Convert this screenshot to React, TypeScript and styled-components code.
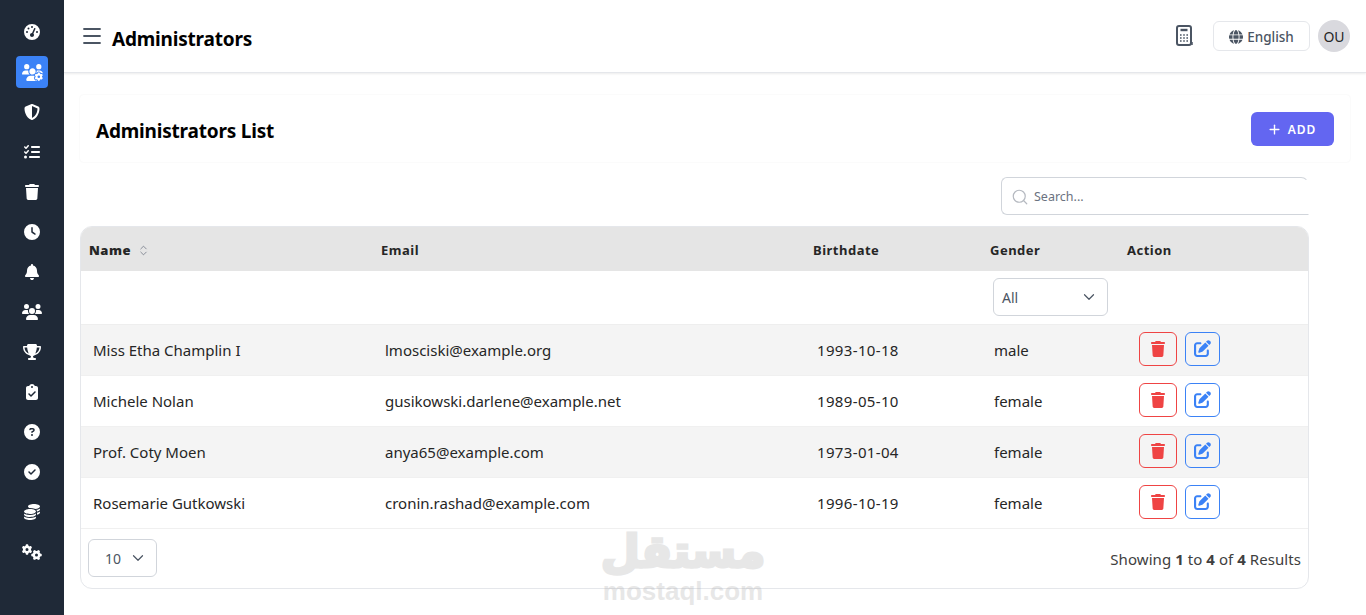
import styled, { createGlobalStyle } from "styled-components";
import { ChevronDown, ChevronsUpDown, Menu, Plus, Search } from "lucide-react";
import { IconType } from "react-icons";
import {
  FaBell,
  FaCircleCheck,
  FaCircleQuestion,
  FaClipboardCheck,
  FaClock,
  FaCoins,
  FaGaugeHigh,
  FaGears,
  FaGlobe,
  FaListCheck,
  FaPenToSquare,
  FaShieldHalved,
  FaTrash,
  FaTrophy,
  FaUsers,
  FaUsersGear,
} from "react-icons/fa6";

const GlobalStyle = createGlobalStyle`
  * { box-sizing: border-box; }
  html, body { margin: 0; height: 100%; background: #fff; }
  body { font-family: "Noto Sans", "Open Sans", sans-serif; color: #262626; overflow: hidden; }
`;

const Shell = styled.div`
  display: flex;
  height: 615px;
  position: relative;
  overflow: hidden;
`;

const Sidebar = styled.nav`
  width: 64px;
  flex: none;
  background: #1f2937;
  display: flex;
  flex-direction: column;
  align-items: center;
  gap: 8px;
  padding-top: 16px;
`;

const NavItem = styled.div<{ $active?: boolean }>`
  width: 32px;
  height: 32px;
  border-radius: 4px;
  display: flex;
  align-items: center;
  justify-content: center;
  color: #fff;
  background: ${(p) => (p.$active ? "#3b82f6" : "transparent")};
`;

const Main = styled.div`
  flex: 1;
  min-width: 0;
  display: flex;
  flex-direction: column;
`;

const Header = styled.header`
  height: 73px;
  flex: none;
  display: flex;
  align-items: center;
  padding: 0 16px;
  background: #fff;
  border-bottom: 1px solid #e5e7eb;
  box-shadow: 0 1px 2px rgba(0, 0, 0, 0.08);
`;

const MenuButton = styled.div`
  color: #4b5563;
  display: flex;
  margin-right: 8px;
`;

const PageTitle = styled.h1`
  margin: 5px 0 0;
  font-size: 19px;
  letter-spacing: -0.2px;
  font-weight: 700;
  color: #000;
  flex: 1;
`;

const CalcIcon = styled.svg`
  width: 18px;
  height: 22px;
  margin-right: 19px;
  margin-top: -1px;
`;

const LangButton = styled.div`
  width: 97px;
  height: 30px;
  border: 1px solid #e5e7eb;
  border-radius: 6px;
  display: flex;
  align-items: center;
  justify-content: center;
  gap: 4px;
  padding-top: 1px;
  font-size: 13.5px;
  font-weight: 500;
  color: #4b5563;
  margin-right: 8px;
`;

const Avatar = styled.div`
  width: 32px;
  height: 32px;
  border-radius: 50%;
  background: #d9d9de;
  color: #262626;
  font-size: 14px;
  display: flex;
  align-items: center;
  justify-content: center;
`;

const Content = styled.main`
  flex: 1;
  padding: 22px 16px 0;
`;

const TitleCard = styled.section`
  height: 67px;
  display: flex;
  align-items: center;
  justify-content: space-between;
  padding: 0 16px;
  border-radius: 4px;
  box-shadow: 0 0 2px rgba(0, 0, 0, 0.07);
`;

const ListTitle = styled.h2`
  margin: 4px 0 0;
  font-size: 19px;
  letter-spacing: -0.2px;
  font-weight: 700;
  color: #000;
`;

const AddButton = styled.div`
  width: 83px;
  height: 34px;
  border-radius: 6px;
  background: #6366f1;
  color: #fff;
  font-size: 12px;
  font-weight: 600;
  letter-spacing: 1px;
  display: flex;
  align-items: center;
  justify-content: center;
  gap: 6px;
  padding: 1px 2px 0 0;
`;

const TableArea = styled.div`
  width: 1229px;
`;

const SearchRow = styled.div`
  display: flex;
  justify-content: flex-end;
  margin: 15px 0 11px;
`;

const SearchBox = styled.div`
  width: 308px;
  height: 38px;
  border: 1px solid #d1d5db;
  border-radius: 6px 8px 0 6px;
  border-right-color: transparent;
  display: flex;
  align-items: center;
  gap: 5px;
  padding: 1px 0 0 9px;
  font-size: 12.5px;
  color: #6b7280;
`;

const TableFrame = styled.div`
  border: 1px solid #e5e7eb;
  border-radius: 12px;
  overflow: hidden;
  background: #fff;
`;

const Table = styled.table`
  width: 100%;
  border-collapse: collapse;
  table-layout: fixed;
`;

const HeadCell = styled.th<{ $width: number }>`
  width: ${(p) => p.$width}px;
  height: 44px;
  background: #e5e5e5;
  padding: 2px 8px 0;
  text-align: left;
  font-size: 13px;
  font-weight: 700;
  letter-spacing: 0.5px;
  color: #262626;
`;

const HeadInner = styled.span`
  display: flex;
  align-items: center;
  gap: 6px;
  color: #6b7280;

  b {
    color: #262626;
  }
`;

const FilterRow = styled.tr`
  height: 53px;
  border-bottom: 1px solid #eeeeee;
`;

const FilterCell = styled.td`
  padding: 0 11px;
`;

const SelectBox = styled.div<{ $width: number; $pad: number }>`
  width: ${(p) => p.$width}px;
  height: 38px;
  border: 1px solid #d1d5db;
  border-radius: 6px;
  display: flex;
  align-items: center;
  justify-content: space-between;
  padding: 0 9px 0 ${(p) => p.$pad}px;
  font-size: 14px;
  color: #4b5563;
  background: #fff;
`;

const Row = styled.tr<{ $shade: boolean }>`
  height: 51px;
  background: ${(p) => (p.$shade ? "#f4f4f4" : "#fff")};
  border-bottom: 1px solid #f0f0f0;
`;

const Cell = styled.td<{ $spaced?: boolean }>`
  padding: 0 12px;
  font-size: 15px;
  letter-spacing: ${(p) => (p.$spaced ? "0.35px" : "0")};
  color: #262626;
  white-space: nowrap;
`;

const ActionRow = styled.div`
  display: flex;
  gap: 8px;
  padding-left: 8px;
  margin-top: -2px;
`;

const IconButton = styled.div<{ $color: string; $width: number }>`
  width: ${(p) => p.$width}px;
  height: 34px;
  border: 1px solid ${(p) => p.$color};
  border-radius: 6px;
  color: ${(p) => p.$color};
  display: flex;
  align-items: center;
  justify-content: center;
`;

const Footer = styled.div`
  height: 59px;
  display: flex;
  align-items: center;
  justify-content: space-between;
  padding: 0 7px;
  font-size: 15px;
  letter-spacing: 0.06px;
  color: #404040;
`;

const FooterText = styled.span`
  padding-top: 1px;
`;

const Watermark = styled.div`
  position: absolute;
  left: 602px;
  top: 525px;
  width: 162px;
  display: flex;
  flex-direction: column;
  align-items: center;
  color: #aaaaaa;
  opacity: 0.28;
  pointer-events: none;
`;

const WatermarkArabic = styled.div`
  font-family: "DejaVu Sans", sans-serif;
  font-size: 45px;
  font-weight: 700;
  line-height: 53px;
  -webkit-text-stroke: 3px #aaaaaa;
`;

const WatermarkLatin = styled.div`
  font-family: "Liberation Sans", sans-serif;
  font-size: 26px;
  font-weight: 700;
  line-height: 26px;
`;

const navIcons: { icon: IconType; size: number }[] = [
  { icon: FaGaugeHigh, size: 16 },
  { icon: FaUsersGear, size: 21 },
  { icon: FaShieldHalved, size: 16 },
  { icon: FaListCheck, size: 16 },
  { icon: FaTrash, size: 16 },
  { icon: FaClock, size: 16 },
  { icon: FaBell, size: 16 },
  { icon: FaUsers, size: 20 },
  { icon: FaTrophy, size: 18 },
  { icon: FaClipboardCheck, size: 16 },
  { icon: FaCircleQuestion, size: 16 },
  { icon: FaCircleCheck, size: 16 },
  { icon: FaCoins, size: 16 },
  { icon: FaGears, size: 20 },
];

const admins = [
  { name: "Miss Etha Champlin I", email: "lmosciski@example.org", birthdate: "1993-10-18", gender: "male" },
  { name: "Michele Nolan", email: "gusikowski.darlene@example.net", birthdate: "1989-05-10", gender: "female" },
  { name: "Prof. Coty Moen", email: "anya65@example.com", birthdate: "1973-01-04", gender: "female" },
  { name: "Rosemarie Gutkowski", email: "cronin.rashad@example.com", birthdate: "1996-10-19", gender: "female" },
];

export default function App() {
  return (
    <Shell>
      <GlobalStyle />
      <Sidebar>
        {navIcons.map(({ icon: Icon, size }, i) => (
          <NavItem key={i} $active={i === 1}>
            <Icon size={size} />
          </NavItem>
        ))}
      </Sidebar>
      <Main>
        <Header>
          <MenuButton>
            <Menu size={24} strokeWidth={1.8} />
          </MenuButton>
          <PageTitle>Administrators</PageTitle>
          <CalcIcon viewBox="0 0 18 22" fill="none" stroke="#4b5563" strokeWidth="2">
            <rect x="1" y="1" width="14" height="19" rx="2" />
            <path d="M4.5 5h7" strokeWidth="2.4" />
            <path d="M4 10h1.6M7.2 10h1.6M10.4 10h1.6M4 13h1.6M7.2 13h1.6M10.4 13h1.6M4 16h1.6M7.2 16h1.6M10.4 16h1.6" strokeWidth="1.6" />
            <path d="M16 17v3" strokeWidth="1.5" />
          </CalcIcon>
          <LangButton>
            <FaGlobe size={14} />
            English
          </LangButton>
          <Avatar>OU</Avatar>
        </Header>
        <Content>
          <TitleCard>
            <ListTitle>Administrators List</ListTitle>
            <AddButton>
              <Plus size={15} strokeWidth={2.2} />
              ADD
            </AddButton>
          </TitleCard>
          <TableArea>
            <SearchRow>
              <SearchBox>
                <Search size={18} color="#b5b9c0" strokeWidth={1.6} />
                Search...
              </SearchBox>
            </SearchRow>
            <TableFrame>
              <Table>
                <thead>
                  <tr>
                    <HeadCell $width={292}>
                      <HeadInner>
                        <b>Name</b>
                        <ChevronsUpDown size={13} strokeWidth={1.4} />
                      </HeadInner>
                    </HeadCell>
                    <HeadCell $width={432}>Email</HeadCell>
                    <HeadCell $width={177}>Birthdate</HeadCell>
                    <HeadCell $width={137}>Gender</HeadCell>
                    <HeadCell $width={189}>Action</HeadCell>
                  </tr>
                </thead>
                <tbody>
                  <FilterRow>
                    <FilterCell />
                    <FilterCell />
                    <FilterCell />
                    <FilterCell>
                      <SelectBox $width={115} $pad={8}>
                        All
                        <ChevronDown size={18} strokeWidth={1.6} />
                      </SelectBox>
                    </FilterCell>
                    <FilterCell />
                  </FilterRow>
                  {admins.map((admin, i) => (
                    <Row key={admin.email} $shade={i % 2 === 0}>
                      <Cell>{admin.name}</Cell>
                      <Cell>{admin.email}</Cell>
                      <Cell $spaced>{admin.birthdate}</Cell>
                      <Cell>{admin.gender}</Cell>
                      <Cell>
                        <ActionRow>
                          <IconButton $color="#ef4444" $width={38}>
                            <FaTrash size={16} />
                          </IconButton>
                          <IconButton $color="#3b82f6" $width={35}>
                            <FaPenToSquare size={17} />
                          </IconButton>
                        </ActionRow>
                      </Cell>
                    </Row>
                  ))}
                </tbody>
              </Table>
              <Footer>
                <SelectBox $width={69} $pad={16}>
                  10
                  <ChevronDown size={18} strokeWidth={1.6} />
                </SelectBox>
                <FooterText>
                  Showing <b>1</b> to <b>4</b> of <b>4</b> Results
                </FooterText>
              </Footer>
            </TableFrame>
          </TableArea>
        </Content>
      </Main>
      <Watermark>
        <WatermarkArabic>مستقل</WatermarkArabic>
        <WatermarkLatin>mostaql.com</WatermarkLatin>
      </Watermark>
    </Shell>
  );
}
